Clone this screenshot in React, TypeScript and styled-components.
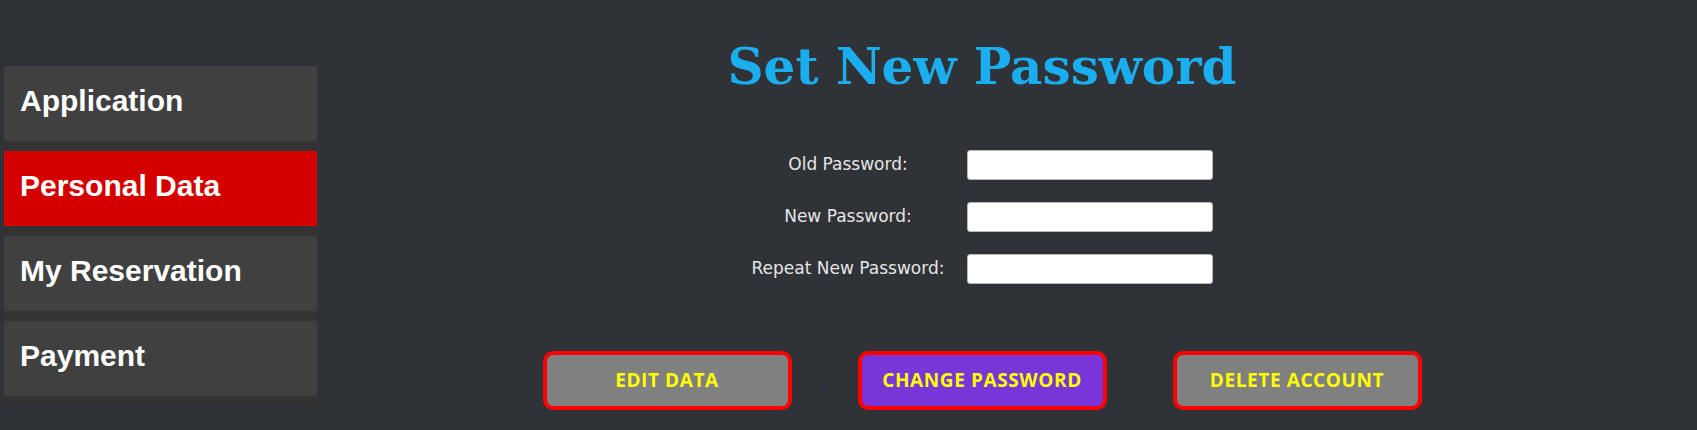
import React from "react";
import styled, { createGlobalStyle } from "styled-components";

const GlobalStyle = createGlobalStyle`
  html, body {
    margin: 0;
    padding: 0;
    background: #2f3236;
  }
  body {
    font-family: "DejaVu Sans", sans-serif;
  }
`;

const Page = styled.div`
  display: flex;
  align-items: flex-start;
  width: 1697px;
  height: 430px;
  overflow: hidden;
`;

const Sidebar = styled.nav`
  display: flex;
  flex-direction: column;
  width: 313px;
  margin: 66px 0 0 4px;
  background: #333333;
`;

const NavItem = styled.div<{ $active?: boolean }>`
  display: flex;
  align-items: center;
  box-sizing: border-box;
  height: 75px;
  margin-bottom: 10px;
  padding: 0 0 6px 16px;
  background: ${(p) => (p.$active ? "#d40000" : "#404040")};
  color: #ffffff;
  font-family: "Liberation Sans", Arial, sans-serif;
  font-weight: 700;
  font-size: 30px;
`;

const Main = styled.main`
  flex: 1;
  display: flex;
  flex-direction: column;
  align-items: center;
  margin-right: 50px;
`;

const Title = styled.h1`
  margin: 38px 0 0 0;
  font-family: "DejaVu Serif", serif;
  font-weight: 700;
  font-size: 50px;
  line-height: 1.164;
  color: #1aaeef;
`;

const Form = styled.div`
  display: grid;
  grid-template-columns: 194px 246px;
  column-gap: 22px;
  row-gap: 22px;
  margin-top: 54px;
`;

const Label = styled.label`
  display: flex;
  align-items: center;
  justify-content: center;
  font-size: 17px;
  color: #e6e6e6;
  padding-bottom: 2px;
  white-space: nowrap;
`;

const Input = styled.input`
  box-sizing: border-box;
  width: 246px;
  height: 30px;
  margin: 0;
  border: 1px solid #b8b8b8;
  border-radius: 3px;
  background: #ffffff;
`;

const ButtonRow = styled.div`
  display: flex;
  align-items: center;
  margin-top: 67px;
`;

const Button = styled.button<{ $primary?: boolean }>`
  box-sizing: border-box;
  width: 249px;
  height: 59px;
  border: 4px solid #ff0000;
  border-radius: 10px;
  background: ${(p) => (p.$primary ? "#7a35d8" : "#808080")};
  color: #ffff00;
  font-family: "Open Sans", sans-serif;
  font-weight: 700;
  font-size: 19px;
  letter-spacing: 0.6px;
  text-transform: uppercase;
  padding: 0 0 2px 0;
`;

const Separator = styled.div`
  display: flex;
  justify-content: center;
  align-items: center;
  width: 66px;
  height: 59px;
`;

const Dash = styled.span`
  display: block;
  width: 5px;
  height: 1px;
  margin-top: 16px;
  background: #4b2f8a;
`;

export default function App() {
  return (
    <>
      <GlobalStyle />
      <Page>
        <Sidebar>
          <NavItem>Application</NavItem>
          <NavItem $active>Personal Data</NavItem>
          <NavItem>My Reservation</NavItem>
          <NavItem>Payment</NavItem>
        </Sidebar>
        <Main>
          <Title>Set New Password</Title>
          <Form>
            <Label htmlFor="old">Old Password:</Label>
            <Input id="old" type="password" />
            <Label htmlFor="new">New Password:</Label>
            <Input id="new" type="password" />
            <Label htmlFor="rep">Repeat New Password:</Label>
            <Input id="rep" type="password" />
          </Form>
          <ButtonRow>
            <Button>Edit Data</Button>
            <Separator>
              <Dash />
            </Separator>
            <Button $primary>Change Password</Button>
            <Separator />
            <Button>Delete Account</Button>
          </ButtonRow>
        </Main>
      </Page>
    </>
  );
}
